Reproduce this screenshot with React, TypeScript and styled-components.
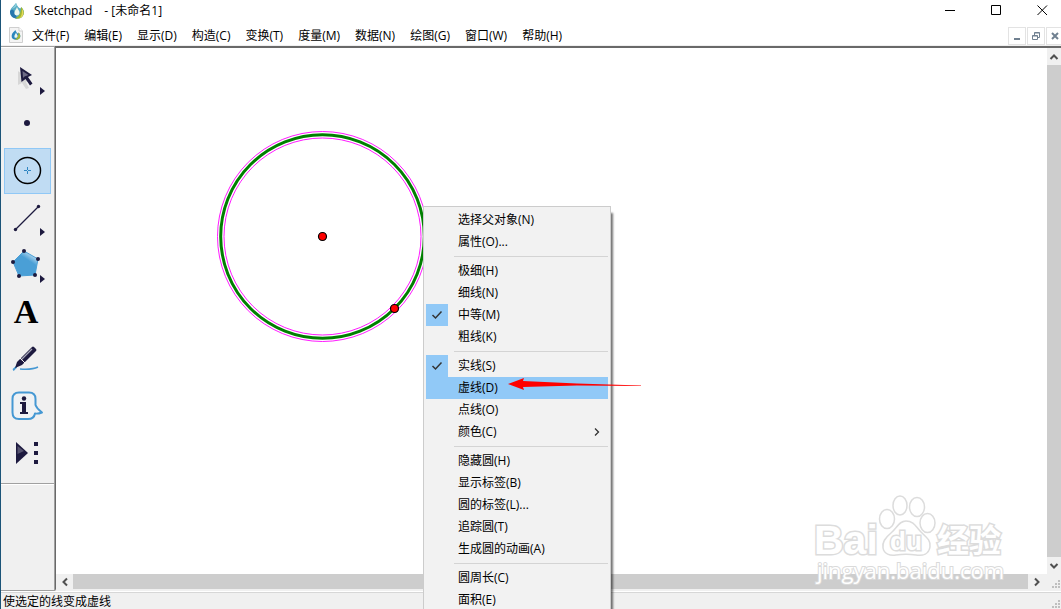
import React from "react";
import styled, { createGlobalStyle, css } from "styled-components";

const ink = "#1d1a3f";

const GlobalStyle = createGlobalStyle`
  *, *::before, *::after { box-sizing: border-box; }
  body { margin: 0; background: #fff; }
  body, button {
    font-family: "Open Sans", "Noto Sans CJK SC", sans-serif;
    font-size: 12px;
    line-height: 16px;
    color: #000;
  }
  button { margin: 0; padding: 0; border: 0; background: transparent; white-space: nowrap; }
`;

const Window = styled.div`
  position: relative;
  display: flex;
  flex-direction: column;
  height: 100vh;
  overflow: hidden;
  border-left: 1px solid #1b5478;
  background: #fff;
`;

const TitleBar = styled.header`
  display: flex;
  align-items: center;
  height: 21px;
  padding-left: 8px;
`;

const Title = styled.h1`
  display: flex;
  gap: 12px;
  flex: 1;
  margin: 0 0 0 9px;
  font-size: 12px;
  font-weight: 400;
  line-height: 16px;
`;

const CaptionButton = styled.button`
  display: flex;
  align-items: center;
  justify-content: center;
  width: 46px;
  height: 21px;
  &:last-child { width: 42px; padding-left: 4px; }
`;

const MenuBar = styled.nav`
  display: flex;
  align-items: flex-end;
  height: 25px;
  padding-left: 8px;
  border-bottom: 1px solid #f0f0f0;
`;

const MenuList = styled.div`
  display: flex;
  flex: 1;
  gap: 15px;
  padding: 0 0 1px 9px;
`;

const DocumentIcon = styled.span`
  display: flex;
  padding-bottom: 2px;
`;

const ChildControls = styled.div`
  display: flex;
  gap: 1px;
`;

const ChildButton = styled.button`
  display: flex;
  align-items: center;
  justify-content: center;
  width: 18px;
  height: 18px;
  border: 1px solid #e3e3e3;
  background: #fff;
  &:last-child { width: 15px; border-right: 0; padding-left: 2px; }
`;

const Workspace = styled.div`
  display: flex;
  flex: 1;
  min-height: 0;
`;

const SideBar = styled.aside`
  display: flex;
  flex-direction: column;
  width: 54px;
  border-top: 1px solid #a0a0a0;
  border-right: 1px solid #a0a0a0;
  border-bottom: 1px solid #a0a0a0;
  background: #f0f0f0;
`;

const ToolBox = styled.div`
  display: flex;
  flex-direction: column;
  gap: 1px;
  padding: 6px 3px 7px;
  border-top: 1px solid #fff;
  border-bottom: 1px solid #a0a0a0;
  box-shadow: 0 1px 0 #fff;
`;

const Tool = styled.button<{ $active?: boolean }>`
  width: 47px;
  height: 46px;
  svg { display: block; }
  ${(p) =>
    p.$active &&
    css`
      background: #c0dcf3;
      box-shadow: inset 0 0 0 1px #90c8f6;
    `}
`;

const Document = styled.main`
  display: flex;
  flex-direction: column;
  flex: 1;
  min-width: 0;
  border-top: 2px solid #696969;
  border-left: 1px solid #696969;
  border-bottom: 2px solid #f0f0f0;
`;

const DocumentRow = styled.div`
  display: flex;
  flex: 1;
  min-height: 0;
`;

const Canvas = styled.div`
  position: relative;
  flex: 1;
  background: #fff;
`;

const Figure = styled.svg`
  position: absolute;
  top: 0;
  left: 0;
`;

const ScrollBar = styled.div<{ $vertical?: boolean }>`
  display: flex;
  flex-direction: ${(p) => (p.$vertical ? "column" : "row")};
  background: #f0f0f0;
  ${(p) => (p.$vertical ? "width: 14px;" : "height: 15px;")}
`;

const ScrollButton = styled.button`
  display: flex;
  align-items: center;
  justify-content: center;
  flex: 0 0 17px;
  min-height: 15px;
`;

const Thumb = styled.div`
  flex: 1;
  background: #cdcdcd;
`;

const Corner = styled.div`
  display: flex;
  align-items: flex-end;
  justify-content: flex-end;
  width: 16px;
`;

const StatusBar = styled.footer`
  display: flex;
  align-items: flex-end;
  justify-content: space-between;
  height: 18px;
  padding-left: 2px;
  line-height: 14px;
  background: linear-gradient(#fff 0 1px, #d7d7d7 1px 2px, #f0f0f0 2px);
`;

const ContextMenu = styled.div`
  position: absolute;
  top: 206px;
  left: 422px;
  width: 188px;
  padding: 2px;
  border: 1px solid #ccc;
  background: #f2f2f2;
  box-shadow: 3px 6px 2px -1px rgba(0, 0, 0, 0.55);
`;

const Item = styled.button<{ $hot?: boolean }>`
  display: flex;
  align-items: center;
  width: 100%;
  height: 22px;
  padding-right: 8px;
  background: ${(p) => (p.$hot ? "#91c9f7" : "transparent")};
`;

const Gutter = styled.span<{ $checked?: boolean }>`
  display: flex;
  align-items: center;
  justify-content: center;
  width: 22px;
  height: 22px;
  margin-right: 10px;
  background: ${(p) => (p.$checked ? "#91c9f7" : "transparent")};
`;

const ItemLabel = styled.span`
  flex: 1;
  text-align: left;
`;

const Separator = styled.hr`
  height: 1px;
  margin: 3px 0 3px 28px;
  border: 0;
  background: #d4d4d4;
`;

const Pointer = styled.svg`
  position: absolute;
  top: 376px;
  left: 506px;
`;

const Watermark = styled.svg`
  position: absolute;
  right: 52px;
  bottom: 18px;
  pointer-events: none;
`;

const Logo = ({ size }: { size: number }) => (
  <svg width={size} height={size} viewBox="0 0 16 16" aria-hidden="true">
    <path d="M7 0C5 3 1 5 1 9.500A7 6 0 0 0 8 15.500A7 6 0 0 0 15 10C15 7 13 5 12 4C12 7 9 5 7 0Z" fill="#58abc4" />
    <path d="M1 8C3 6 5 6 7 12L8 15.500C4 15.500 1 13 1 8Z" fill="#2676ad" />
    <path d="M12 4C15 6 16 11 13 14C11 16 8 16 6 15C10 14 12 10 12 4Z" fill="#9eb72e" />
    <path d="M13 6C16 10 14 14 10 15.500C13 13 13 10 13 6Z" fill="#e7d95a" />
    <path d="M8 4C7 7 5 8 5.500 11C6 13 10 13 10.500 10.500C11 8 9 7 8 4Z" fill="#eef7ec" />
    <path d="M7 0C6 3 4 4 3 6C5 5 7 4 8 2Z" fill="#8fd1dd" />
  </svg>
);

const FileLogo = () => (
  <svg width="14" height="16" viewBox="0 0 14 16" aria-hidden="true">
    <path d="M.5 .5H10L13.500 4V15.500H.5Z" fill="#f4f4f4" stroke="#cfcfcf" />
    <path d="M10 .5V4H13.500" fill="#fff" stroke="#cfcfcf" />
    <svg x="2" y="3" width="10" height="10" viewBox="0 0 16 16">
      <path d="M7 0C5 3 1 5 1 9.500A7 6 0 0 0 8 15.500A7 6 0 0 0 15 10C15 7 13 5 12 4C12 7 9 5 7 0Z" fill="#2b86bd" />
      <path d="M12 4C15 6 16 11 13 14C11 16 8 16 6 15C10 14 12 10 12 4Z" fill="#a3b733" />
      <path d="M8 4C7 7 5 8 5.500 11C6 13 10 13 10.500 10.500C11 8 9 7 8 4Z" fill="#eef7ec" />
    </svg>
  </svg>
);

const Flyout = () => <path d="M36 33V41L41 37Z" fill={ink} />;

const tools: { name: string; active?: boolean; art: React.ReactNode }[] = [
  {
    name: "移动箭头工具",
    art: (
      <>
        <path d="M14 17L26 26L22 28L25 34L22 35L18 29L14 31Z" fill="#000" opacity=".1" />
        <path d="M16 13L28 21L24 23L28.500 29.500L26 31.500L21.500 25L17.500 28Z" fill={ink} />
        <path d="M18.500 17L24.500 21L20.500 22.500L19 24Z" fill="#6d6b85" />
        <Flyout />
      </>
    ),
  },
  { name: "点工具", art: <circle cx="23" cy="22" r="3" fill={ink} /> },
  {
    name: "圆工具",
    active: true,
    art: (
      <>
        <circle cx="23.500" cy="22.500" r="13" fill="none" stroke="#000" strokeWidth="1.500" />
        <path d="M20 22.500H27M23.500 19V26" stroke="#2f86c2" />
        <rect x="23" y="22" width="1" height="1" fill="#c0dcf3" />
      </>
    ),
  },
  {
    name: "线段工具",
    art: (
      <>
        <path d="M11.500 34.500L34.500 11.500" stroke={ink} strokeWidth="1.200" />
        <circle cx="11.500" cy="34.500" r="1.700" fill={ink} />
        <circle cx="34.500" cy="11.500" r="1.700" fill={ink} />
        <Flyout />
      </>
    ),
  },
  {
    name: "多边形工具",
    art: (
      <>
        <defs>
          <linearGradient id="gloss" x1=".85" y1=".1" x2=".45" y2=".7">
            <stop offset="0" stopColor="#cfe6f5" />
            <stop offset=".5" stopColor="#4a9fd6" />
          </linearGradient>
        </defs>
        <path d="M20 9L34 17L31 33L15 34L9 20Z" fill="url(#gloss)" stroke="#4a9fd6" />
        {[[20, 9], [34, 17], [31, 33], [15, 34], [9, 20]].map(([x, y]) => (
          <circle key={x} cx={x} cy={y} r="2" fill={ink} />
        ))}
        <Flyout />
      </>
    ),
  },
  {
    name: "文本工具",
    art: (
      <text x="22" y="34" textAnchor="middle" fontFamily="Liberation Serif, serif" fontWeight="700" fontSize="34">
        A
      </text>
    ),
  },
  {
    name: "标识工具",
    art: (
      <>
        <path d="M9 34C11 33 11 31 13 31" fill="none" stroke="#4598d3" strokeWidth="2" />
        <path d="M16 33C23 33.500 29 33.500 34 31" fill="none" stroke="#4598d3" strokeWidth="1.500" />
        <path d="M11 32L13 26L28 11Q29 10 30 11L32 13Q33 14 32 15L18 29Z" fill={ink} />
        <path d="M17 24L28 13" stroke="#a8a7b8" strokeWidth="1.200" />
        <path d="M16 22L21 27" stroke="#f0f0f0" />
      </>
    ),
  },
  {
    name: "信息工具",
    art: (
      <>
        <path
          d="M15 9.500H25Q31.500 9.500 31.500 16V22Q33 26 38 29.500Q34 31 31 30.500Q30 36 24 36H15Q8.500 36 8.500 29.500V16Q8.500 9.500 15 9.500Z"
          fill="#f0f2f4"
          stroke="#4598d3"
          strokeWidth="2"
          strokeLinejoin="round"
        />
        <path d="M16 19H22V29H24V31H16V29H18V21H16Z" fill={ink} />
        <circle cx="20" cy="15.500" r="2.200" fill={ink} />
      </>
    ),
  },
  {
    name: "自定义工具",
    art: (
      <>
        <path d="M12 12V34L24 23Z" fill={ink} />
        <path d="M13.500 16V24L20 21Z" fill="#6d6b85" opacity=".7" />
        <path d="M30 12H34V16H30ZM30 21H34V25H30ZM30 30H34V34H30Z" fill={ink} />
      </>
    ),
  },
];

const menus = ["文件(F)", "编辑(E)", "显示(D)", "构造(C)", "变换(T)", "度量(M)", "数据(N)", "绘图(G)", "窗口(W)", "帮助(H)"];

type Entry = { label: string; checked?: boolean; hot?: boolean; submenu?: boolean };

const groups: Entry[][] = [
  [{ label: "选择父对象(N)" }, { label: "属性(O)..." }],
  [{ label: "极细(H)" }, { label: "细线(N)" }, { label: "中等(M)", checked: true }, { label: "粗线(K)" }],
  [
    { label: "实线(S)", checked: true },
    { label: "虚线(D)", hot: true },
    { label: "点线(O)" },
    { label: "颜色(C)", submenu: true },
  ],
  [
    { label: "隐藏圆(H)" },
    { label: "显示标签(B)" },
    { label: "圆的标签(L)..." },
    { label: "追踪圆(T)" },
    { label: "生成圆的动画(A)" },
  ],
  [{ label: "圆周长(C)" }, { label: "面积(E)" }],
];

const chevrons = {
  up: "M1.500 7L5 3.500L8.500 7",
  down: "M1.500 3L5 6.500L8.500 3",
  left: "M7 1.500L3.500 5L7 8.500",
  right: "M3 1.500L6.500 5L3 8.500",
};

const Chevron = ({ dir }: { dir: keyof typeof chevrons }) => (
  <svg width="10" height="10" aria-hidden="true">
    <path d={chevrons[dir]} fill="none" stroke="#505050" strokeWidth="2" />
  </svg>
);

const Grip = () => (
  <svg width="9" height="9" aria-hidden="true">
    <path d="M6 0H8V2H6ZM3 3H5V5H3ZM6 3H8V5H6ZM0 6H2V8H0ZM3 6H5V8H3ZM6 6H8V8H6Z" fill="#bfbfbf" />
  </svg>
);

export default function App() {
  return (
    <Window>
      <GlobalStyle />
      <TitleBar>
        <Logo size={16} />
        <Title>
          <span>Sketchpad</span>
          <span>- [未命名1]</span>
        </Title>
        <CaptionButton aria-label="最小化">
          <svg width="11" height="11"><path d="M0 5.500H10" stroke="#000" /></svg>
        </CaptionButton>
        <CaptionButton aria-label="最大化">
          <svg width="11" height="11"><path d="M.5 .5H9.500V9.500H.5Z" fill="none" stroke="#000" /></svg>
        </CaptionButton>
        <CaptionButton aria-label="关闭">
          <svg width="11" height="11"><path d="M.5 .5L10 10M10 .5L.5 10" stroke="#000" /></svg>
        </CaptionButton>
      </TitleBar>

      <MenuBar>
        <DocumentIcon><FileLogo /></DocumentIcon>
        <MenuList>
          {menus.map((m) => (
            <button key={m}>{m}</button>
          ))}
        </MenuList>
        <ChildControls>
          <ChildButton aria-label="最小化文档">
            <svg width="8" height="8"><path d="M1 6H7V8H1Z" fill="#708090" /></svg>
          </ChildButton>
          <ChildButton aria-label="还原文档">
            <svg width="8" height="8">
              <path d="M2.500 3V.5H7.500V5.500H6M2.500 1H7.500M.5 3.500H5.500V7.500H.5ZM.5 4H5.500" fill="none" stroke="#708090" />
            </svg>
          </ChildButton>
          <ChildButton aria-label="关闭文档">
            <svg width="8" height="8"><path d="M1 1L7 7M7 1L1 7" stroke="#708090" strokeWidth="2" /></svg>
          </ChildButton>
        </ChildControls>
      </MenuBar>

      <Workspace>
        <SideBar>
          <ToolBox>
            {tools.map((t) => (
              <Tool key={t.name} $active={t.active} aria-label={t.name}>
                <svg width="47" height="46" aria-hidden="true">{t.art}</svg>
              </Tool>
            ))}
          </ToolBox>
        </SideBar>

        <Document>
          <DocumentRow>
            <Canvas>
              <Figure width="400" height="320" role="img" aria-label="圆">
                <circle cx="266.500" cy="188.500" r="105" fill="none" stroke="#f0f" strokeWidth=".9" />
                <circle cx="266.500" cy="188.500" r="98.500" fill="none" stroke="#f0f" strokeWidth=".9" />
                <circle cx="266.500" cy="188.500" r="101.800" fill="none" stroke="#008000" strokeWidth="3" />
                <circle cx="266.500" cy="188.500" r="4" fill="#f00" stroke="#000" strokeWidth="1.200" />
                <circle cx="338.500" cy="260.500" r="4" fill="#f00" stroke="#000" strokeWidth="1.200" />
              </Figure>
            </Canvas>
            <ScrollBar $vertical>
              <ScrollButton aria-label="向上滚动"><Chevron dir="up" /></ScrollButton>
              <Thumb />
              <ScrollButton aria-label="向下滚动"><Chevron dir="down" /></ScrollButton>
            </ScrollBar>
          </DocumentRow>
          <ScrollBar>
            <ScrollButton aria-label="向左滚动"><Chevron dir="left" /></ScrollButton>
            <Thumb />
            <ScrollButton aria-label="向右滚动"><Chevron dir="right" /></ScrollButton>
            <Corner><Grip /></Corner>
          </ScrollBar>
        </Document>
      </Workspace>

      <StatusBar>
        <span>使选定的线变成虚线</span>
        <Grip />
      </StatusBar>

      <Watermark width="200" height="100" viewBox="808 491 200 100" role="img" aria-label="Baidu 经验">
        <g fill="#fff" stroke="#dcdcdc" strokeWidth="1.500">
          <ellipse cx="886" cy="519" rx="7.500" ry="9.500" />
          <ellipse cx="899" cy="505.500" rx="7" ry="9.500" />
          <ellipse cx="916" cy="507" rx="7.500" ry="9.500" />
          <ellipse cx="926.500" cy="523" rx="7.500" ry="9.500" />
          <path d="M905 521C898 521 896 528 890 533C884 538 881 542 882 548C883 554 889 556 895 555C902 554 908 554 915 555C922 556 928 554 929 547C930 540 925 537 920 532C915 527 913 521 905 521Z" />
        </g>
        <g fill="#fff" stroke="#dcdcdc" strokeWidth="3" paintOrder="stroke" fontWeight="700">
          <text x="813" y="554" fontSize="41" fontFamily="Liberation Sans, sans-serif">Bai</text>
          <text x="889" y="550" fontSize="26" fontFamily="Liberation Sans, sans-serif">du</text>
          <text x="936" y="552" fontSize="32" fontFamily="Noto Sans CJK SC, sans-serif">经验</text>
        </g>
        <text
          x="816"
          y="579"
          fontSize="22"
          fontFamily="Open Sans, sans-serif"
          fill="#fff"
          stroke="#dadada"
          strokeWidth="2"
          paintOrder="stroke"
        >
          jingyan.baidu.com
        </text>
      </Watermark>

      <ContextMenu role="menu">
        {groups.map((group, i) => (
          <React.Fragment key={i}>
            {i > 0 && <Separator />}
            {group.map((e) => (
              <Item key={e.label} role="menuitem" $hot={e.hot}>
                <Gutter $checked={e.checked}>
                  {e.checked && (
                    <svg width="12" height="10" aria-hidden="true">
                      <path d="M1.500 5L4.500 8L10.500 1.500" fill="none" stroke="#333" strokeWidth="1.500" />
                    </svg>
                  )}
                </Gutter>
                <ItemLabel>{e.label}</ItemLabel>
                {e.submenu && (
                  <svg width="6" height="10" aria-hidden="true">
                    <path d="M1 1.500L4.500 5L1 8.500" fill="none" stroke="#333" strokeWidth="1.300" />
                  </svg>
                )}
              </Item>
            ))}
          </React.Fragment>
        ))}
      </ContextMenu>

      <Pointer width="136" height="18" aria-hidden="true">
        <path d="M1 8L17 2L16 5L70 7.500L134 9.500V10L70 9.500L16 11L17 14Z" fill="#f00" />
      </Pointer>
    </Window>
  );
}
